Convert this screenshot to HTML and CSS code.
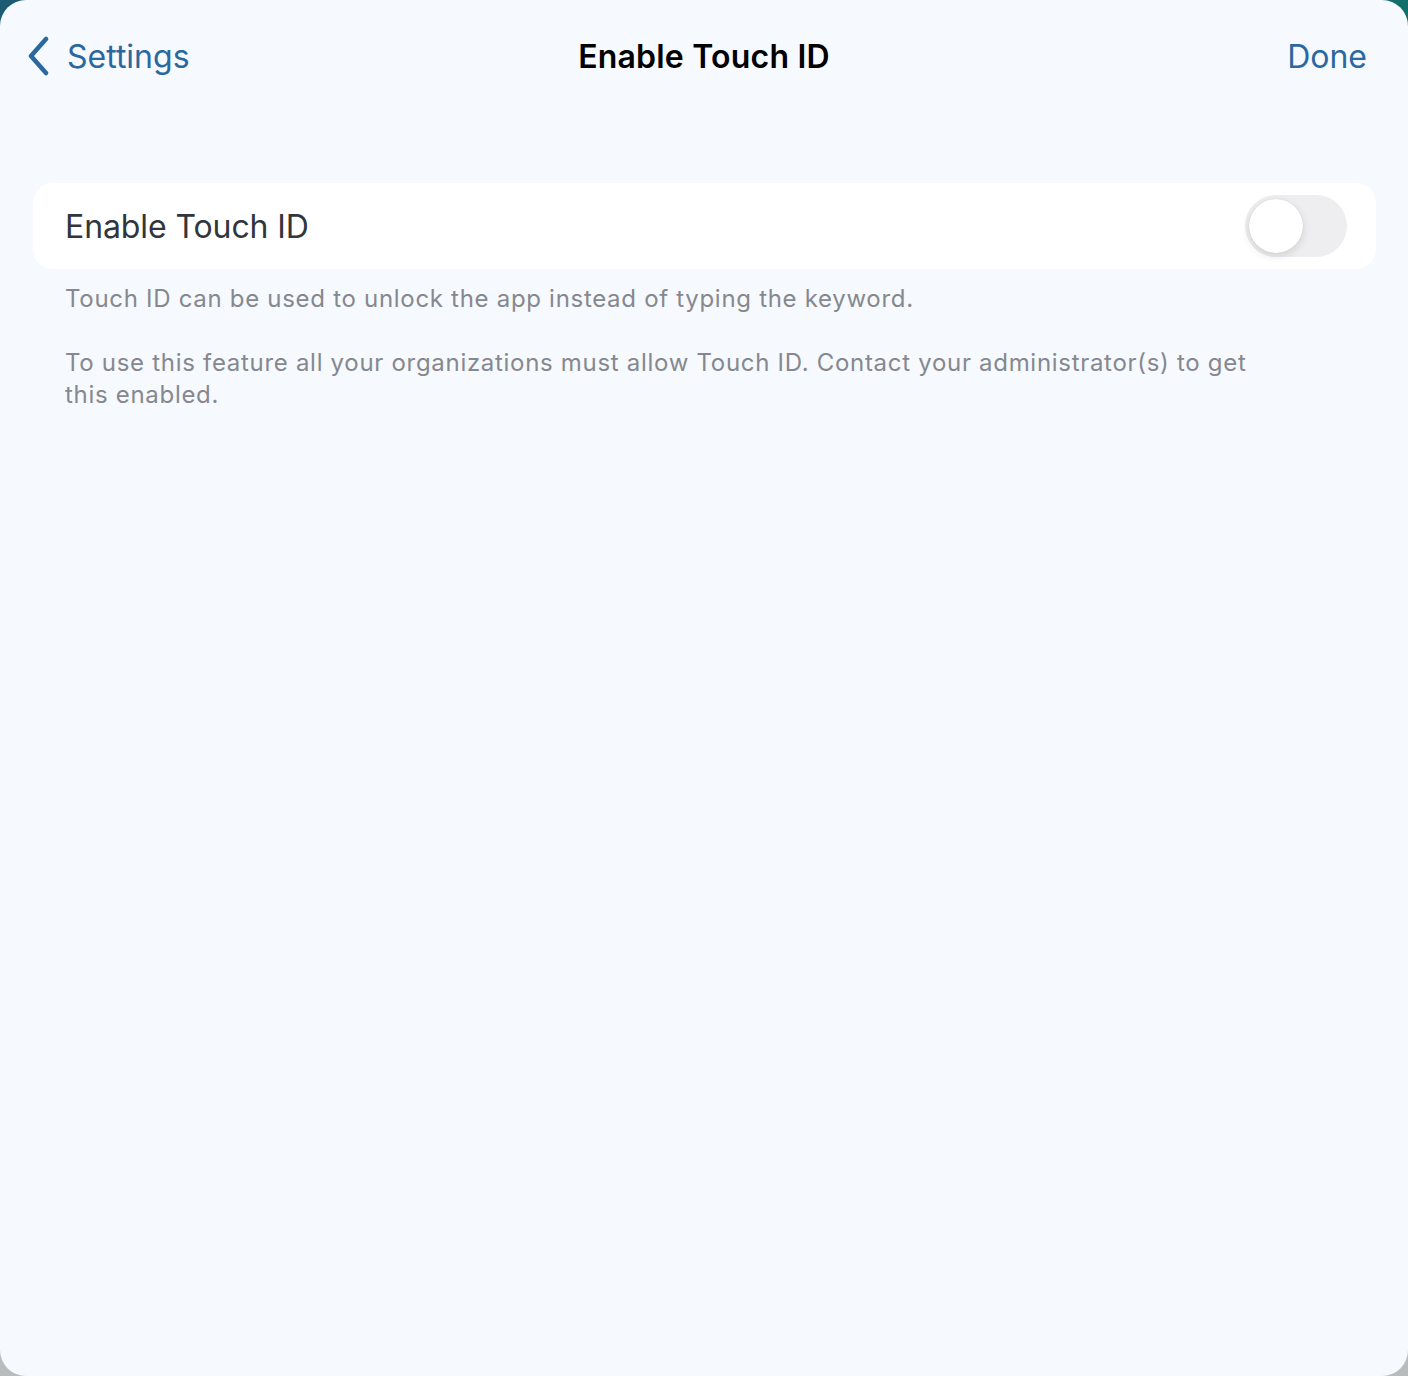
FILE: index.html
```html
<!DOCTYPE html>
<html lang="en">
<head>
  <meta charset="UTF-8">
  <title>Enable Touch ID</title>
  <link rel="stylesheet" href="styles.css">
</head>
<body>
  <div class="sheet">
    <div class="nav">
      <a class="nav-back" href="#">
        <svg class="chevron" width="24" height="40" viewBox="0 0 24 40">
          <path d="M20 3 L5 20 L20 37" fill="none" stroke="currentColor" stroke-width="4.5" stroke-linecap="round" stroke-linejoin="round"/>
        </svg>
        <span>Settings</span>
      </a>
      <div class="nav-title">Enable Touch ID</div>
      <a class="nav-done" href="#">Done</a>
    </div>

    <div class="group">
      <div class="row">
        <span class="row-label">Enable Touch ID</span>
        <span class="switch"><span class="knob"></span></span>
      </div>
    </div>

    <div class="footer">
      <p>Touch ID can be used to unlock the app instead of typing the keyword.</p>
      <p>To use this feature all your organizations must allow Touch ID. Contact your administrator(s) to get this enabled.</p>
    </div>
  </div>
</body>
</html>
```

FILE: styles.css
```css
html {
  height: 100%;
  background: linear-gradient(90deg, #1d5b72 0%, #136f6a 100%);
}
body {
  margin: 0;
  height: 100%;
  background: linear-gradient(180deg, transparent 0, transparent 50%, #b9bcbc 50%, #b9bcbc 100%);
  font-family: Inter, "Noto Sans", sans-serif;
}
.sheet {
  height: 1376px;
  box-sizing: border-box;
  background: #f6f9fe;
  border-radius: 26px;
  overflow: hidden;
}
.nav {
  height: 112px;
  display: flex;
  align-items: center;
  justify-content: space-between;
  padding: 0 41px 0 26px;
  position: relative;
}
.nav a {
  color: #2a689f;
  text-decoration: none;
  font-size: 32px;
  letter-spacing: 0;
}
.nav-back {
  display: flex;
  align-items: center;
  gap: 17px;
}
.chevron {
  display: block;
}
.nav-title {
  position: absolute;
  left: 0;
  right: 0;
  text-align: center;
  font-size: 32px;
  font-weight: 600;
  color: #000;
  letter-spacing: 0.2px;
  pointer-events: none;
}
.group {
  margin: 71px 32px 0 33px;
  background: #fff;
  border-radius: 20px;
}
.row {
  height: 86px;
  display: flex;
  align-items: center;
  justify-content: space-between;
  padding: 0 29px 0 32px;
}
.row-label {
  font-size: 32px;
  color: #31363d;
  letter-spacing: -0.1px;
}
.switch {
  width: 102px;
  height: 62px;
  border-radius: 31px;
  background: #eeeef0;
  display: flex;
  align-items: center;
  padding: 0 4px;
  box-sizing: border-box;
}
.knob {
  width: 54px;
  height: 54px;
  border-radius: 50%;
  background: #fff;
  box-shadow: 0 3px 8px rgba(0, 0, 0, 0.12), 0 0 1px rgba(0, 0, 0, 0.16);
}
.footer {
  padding: 14px 148px 0 65px;
  color: #85888e;
  font-size: 24px;
  line-height: 32px;
  letter-spacing: 0.7px;
}
.footer p {
  margin: 0 0 32px;
}
```
